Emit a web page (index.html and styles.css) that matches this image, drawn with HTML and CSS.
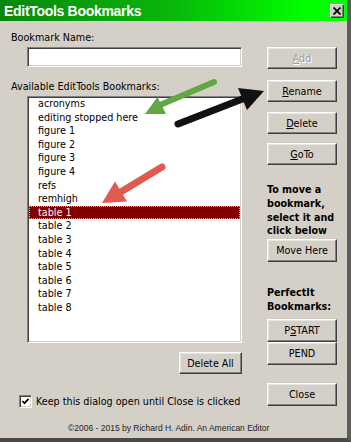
FILE: index.html
```html
<!DOCTYPE html>
<html lang="en">
<head>
    <meta charset="UTF-8">
    <meta name="viewport" content="width=device-width, initial-scale=1.0">
    <title>EditTools Bookmarks</title>
    <link rel="stylesheet" href="styles.css">
</head>
<body>
    <div class="window">
        <div class="titlebar">
            <span class="title">EditTools Bookmarks</span>
            <button class="close-x" aria-label="Close">
                <svg width="8" height="8" viewBox="0 0 8 8">
                    <path d="M0.5 0.5 L7.5 7.5 M7.5 0.5 L0.5 7.5" stroke="#000" stroke-width="1.8" fill="none"/>
                </svg>
            </button>
        </div>

        <div class="dialog">
            <div class="main">
                <div class="left">
                    <label class="field-label" for="bookmarkName">Bookmark Name:</label>
                    <input type="text" class="text-input" id="bookmarkName">

                    <div class="field-label second">Available EditTools Bookmarks:</div>
                    <div class="listbox">
                        <ul>
                            <li>acronyms</li>
                            <li>editing stopped here</li>
                            <li>figure 1</li>
                            <li>figure 2</li>
                            <li>figure 3</li>
                            <li>figure 4</li>
                            <li>refs</li>
                            <li>remhigh</li>
                            <li class="selected">table 1</li>
                            <li>table 2</li>
                            <li>table 3</li>
                            <li>table 4</li>
                            <li>table 5</li>
                            <li>table 6</li>
                            <li>table 7</li>
                            <li>table 8</li>
                        </ul>
                    </div>

                    <div class="delete-all-row">
                        <button class="btn delete-all">Delete All</button>
                    </div>

                    <label class="keep-open">
                        <span class="checkbox">
                            <svg width="9" height="9" viewBox="0 0 9 9">
                                <path d="M1.5 4 L3.5 6.2 L7.6 1.8" stroke="#000" stroke-width="1.7" fill="none"/>
                            </svg>
                        </span>
                        Keep this dialog open until Close is clicked
                    </label>
                </div>

                <div class="right">
                    <button class="btn disabled btn-add"><u>A</u>dd</button>
                    <button class="btn btn-rename"><u>R</u>ename</button>
                    <button class="btn btn-delete"><u>D</u>elete</button>
                    <button class="btn btn-goto"><u>G</u>oTo</button>

                    <p class="note move-note">To move a bookmark, select it and click below</p>
                    <button class="btn tall move-here">Move Here</button>

                    <p class="note perfectit-note">PerfectIt Bookmarks:</p>
                    <button class="btn tall pstart">P<u>S</u>TART</button>
                    <button class="btn tall">PEND</button>

                    <button class="btn tall close-btn">Close</button>
                </div>
            </div>

            <div class="footer">©2006 - 2015 by Richard H. Adin. An American Editor</div>
        </div>

        <!-- annotation arrows drawn over the dialog -->
        <svg class="arrows" width="351" height="442" viewBox="0 0 351 442">
            <g stroke-linecap="round">
                <line x1="214" y1="82" x2="160" y2="105" stroke="#62a842" stroke-width="6"/>
                <polygon points="145,114 157.5,97 166,114" fill="#62a842"/>

                <line x1="178" y1="124" x2="245" y2="98" stroke="#111" stroke-width="7"/>
                <polygon points="264,91 238,88 247,110" fill="#111"/>

                <line x1="162" y1="167" x2="119" y2="193" stroke="#e25a4f" stroke-width="7"/>
                <polygon points="102,203 115,181.5 127,201.5" fill="#e25a4f"/>
            </g>
        </svg>
    </div>
</body>
</html>
```

FILE: styles.css
```css
body {
    margin: 0;
    background: #d4d0c8;
    font-family: "DejaVu Sans Condensed", "DejaVu Sans", sans-serif;
    font-size: 10.7px;
    color: #000;
}

.window {
    position: relative;
    width: 351px;
    height: 442px;
    box-sizing: border-box;
    background: #d4d0c8;
    border-right: 4px solid #5c5c5c;
    border-bottom: 4px solid #4a4a4a;
}

.titlebar {
    height: 21px;
    display: flex;
    align-items: center;
    justify-content: space-between;
    background: linear-gradient(90deg, #0c860c 0%, #08b808 50%, #00ff00 88%);
}

.title {
    padding-left: 4px;
    color: #fff;
    font-family: "Liberation Sans", Arial, sans-serif;
    font-weight: bold;
    font-size: 14px;
    letter-spacing: -0.3px;
}

.close-x {
    width: 14px;
    height: 14px;
    margin-right: 3px;
    padding: 0;
    display: flex;
    align-items: center;
    justify-content: center;
    background: #d4d0c8;
    border: 1px solid;
    border-color: #fff #404040 #404040 #fff;
    box-shadow: inset -1px -1px #808080;
}

.dialog {
    padding: 10px 0 0 11px;
}

.main {
    display: flex;
    gap: 25px;
}

.left {
    width: 231px;
}

.right {
    width: 70px;
}

.field-label {
    display: block;
    line-height: 13px;
    height: 13px;
}

.field-label.second {
    margin-top: 13px;
}

.text-input {
    display: block;
    margin: 3px 0 0 16px;
    width: 215px;
    height: 20px;
    box-sizing: border-box;
    background: #fff;
    border: 1px solid;
    border-color: #808080 #fff #fff #808080;
    box-shadow: inset 1px 1px #404040, inset -1px -1px #d4d0c8;
    outline: none;
}

.listbox {
    margin: 3px 0 0 16px;
    width: 215px;
    height: 247px;
    box-sizing: border-box;
    background: #fff;
    border: 1px solid;
    border-color: #808080 #fff #fff #808080;
    box-shadow: inset 1px 1px #404040, inset -1px -1px #d4d0c8;
    padding: 1px 1px 0;
    overflow: hidden;
}

.listbox ul {
    list-style: none;
    margin: -1px 0 0;
    padding: 0;
}

.listbox li {
    line-height: 13.6px;
    height: 13.6px;
    padding-left: 9px;
    white-space: nowrap;
}

.listbox li.selected {
    background: #800000;
    color: #fff2f2;
    outline: 1px dotted #d8b070;
    outline-offset: -1px;
}

.btn {
    display: block;
    width: 70px;
    height: 22px;
    padding: 0;
    box-sizing: border-box;
    background: #d4d0c8;
    border: 1px solid;
    border-color: #fff #404040 #404040 #fff;
    box-shadow: inset -1px -1px #808080, inset 1px 1px #e8e6e0;
    font-family: inherit;
    font-size: 10.7px;
    color: #000;
}

.btn.tall {
    height: 23px;
}

.btn.disabled {
    color: #a09d96;
    text-shadow: 1px 1px #fff;
}

.btn-add { margin-top: 16px; }
.btn-rename { margin-top: 11px; }
.btn-delete { margin-top: 10px; }
.btn-goto { margin-top: 9px; }

.note {
    margin: 0;
    font-weight: bold;
}

.move-note {
    margin-top: 18px;
    line-height: 13.75px;
}

.move-here { margin-top: 1px; }

.perfectit-note {
    margin-top: 24px;
    line-height: 14px;
}

.pstart { margin-top: 5px; }

.close-btn { margin-top: 18px; }

.delete-all-row {
    display: flex;
    justify-content: flex-end;
    margin-top: 9px;
}

.delete-all {
    width: 63px;
}

.keep-open {
    display: flex;
    align-items: center;
    gap: 4px;
    margin: 21px 0 0 8px;
    line-height: 13px;
    white-space: nowrap;
}

.checkbox {
    flex: none;
    width: 13px;
    height: 13px;
    box-sizing: border-box;
    display: flex;
    align-items: center;
    justify-content: center;
    background: #fff;
    border: 1px solid;
    border-color: #808080 #fff #fff #808080;
    box-shadow: inset 1px 1px #404040, inset -1px -1px #d4d0c8;
}

.footer {
    margin: 15px 0 0 57px;
    font-family: "Liberation Sans", Arial, sans-serif;
    font-size: 8.5px;
    line-height: 10px;
    color: #222;
}

.arrows {
    position: absolute;
    top: 0;
    left: 0;
    pointer-events: none;
}
```
